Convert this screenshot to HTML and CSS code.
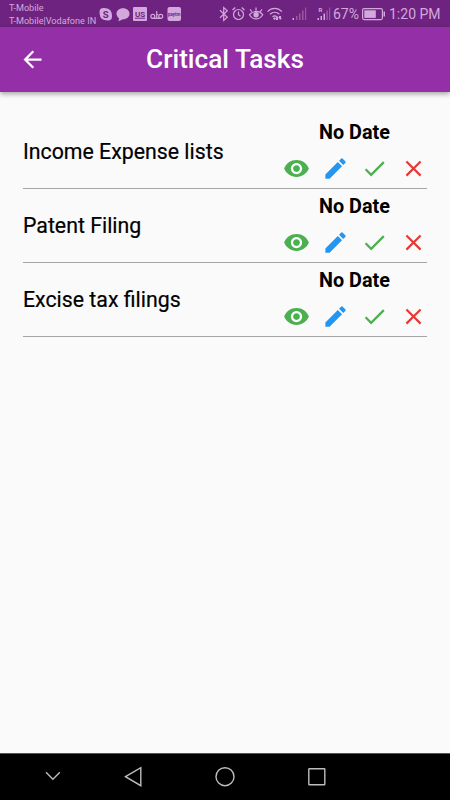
FILE: index.html
```html
<!DOCTYPE html>
<html lang="en">
<head>
<meta charset="utf-8">
<title>Critical Tasks</title>
<link rel="stylesheet" href="styles.css">
</head>
<body>
<svg class="defs" width="0" height="0" aria-hidden="true">
  <symbol id="eye" viewBox="0 0 24 24"><path d="M12 4.500C7 4.500 2.730 7.610 1 12c1.730 4.390 6 7.500 11 7.500s9.270-3.110 11-7.500c-1.730-4.390-6-7.500-11-7.500zM12 17c-2.760 0-5-2.240-5-5s2.240-5 5-5 5 2.240 5 5-2.240 5-5 5zm0-8c-1.660 0-3 1.340-3 3s1.340 3 3 3 3-1.340 3-3-1.340-3-3-3z"/></symbol>
  <symbol id="edit" viewBox="0 0 24 24"><path d="M3 17.250V21h3.750L17.810 9.940l-3.750-3.750L3 17.250zM20.710 7.040c.39-.39.39-1.020 0-1.410l-2.340-2.340c-.39-.39-1.020-.39-1.410 0l-1.830 1.830 3.750 3.750 1.830-1.830z"/></symbol>
  <symbol id="check" viewBox="0 0 24 24"><path d="M9 16.170L4.830 12l-1.420 1.410L9 19 21 7l-1.410-1.410z"/></symbol>
  <symbol id="close" viewBox="0 0 24 24"><path d="M19 6.410L17.590 5 12 10.590 6.410 5 5 6.410 10.590 12 5 17.590 6.410 19 12 13.410 17.590 19 19 17.590 13.410 12z"/></symbol>
</svg>
<div class="screen">
  <div class="status">
    <div class="carrier"><span>T-Mobile</span><span>T-Mobile|Vodafone IN</span></div>
    <svg class="notices" width="84" height="27" viewBox="99 0 84 27">
      <circle cx="103.500" cy="12" r="4"/><circle cx="108" cy="16.500" r="4"/><circle cx="105.800" cy="14.200" r="6"/>
      <text class="skype" x="105.800" y="17.500" text-anchor="middle">S</text>
      <path d="M123 8.300c3.800 0 6.500 2.400 6.500 5.500s-2.700 5.500-6.500 5.500l-4.500 2 .6-3c-1.600-1-2.600-2.600-2.600-4.500 0-3.100 2.700-5.500 6.500-5.500z"/>
      <rect x="133" y="7" width="14" height="14" rx="1"/>
      <text class="us" x="140" y="16.500" text-anchor="middle">US</text>
      <path class="cut" d="M135 18.200h10"/>
      <g class="line"><circle cx="152.800" cy="16.300" r="2"/><circle cx="160.700" cy="16.300" r="2"/><path d="M152.800 18.300h8M156.700 18v-7M156.700 14.500h1.500"/></g>
      <rect x="167.500" y="7" width="13.500" height="14" rx="2"/>
      <text class="paytm" x="174.200" y="15.500" text-anchor="middle">paytm</text>
    </svg>
    <svg class="signals" width="113" height="27" viewBox="218 0 113 27">
      <g class="line">
        <path d="M220 10.200l7.300 7-3.600 3.300V7.500l3.600 3.300-7.300 6.900"/>
        <circle cx="238.500" cy="14.500" r="5"/><path d="M238.500 11.500v3.200l2 1.600M232.500 10l2.800-2.500M244.500 10l-2.800-2.500"/>
        <path d="M249.500 14.700c3.500-4.300 9.700-4.300 13.200 0-3.500 5.600-9.700 5.600-13.200 0zM251.800 11.700l-1.700-2.300M256 10.500V7.500M260.300 11.700l1.700-2.300"/>
        <path d="M267.500 11.700c4.200-4.300 10.200-4.300 14.400 0M270 14.300c2.800-2.700 6.600-2.700 9.400 0M272.500 16.800c1.400-1.300 3-1.300 4.400 0"/>
      </g>
      <circle cx="256.100" cy="14.700" r="2.700"/><circle cx="274.500" cy="18.500" r="1.200"/>
      <path d="M277 16l2 2h-1v2h-2v-2zM280 20l2-2h-1v-2h-2v2z"/>
      <path d="M292.500 18h1.500v2h-1.500z"/>
      <path class="dim" d="M296 16h1.500v4H296zM299 13.500h1.500V20H299zM302 10.500h1.500V20H302zM305 7.500h1.200V20H305z"/>
      <path d="M317.500 18h1.500v2h-1.500zM320.500 16h1.500v4h-1.500zM323.500 13.500h1.500V20h-1.500z"/>
      <path class="dim" d="M326.300 10.500h1.500V20h-1.500zM329 7.500h1.200V20H329z"/>
      <text class="roam" x="318.500" y="12">R</text>
    </svg>
    <span class="percent">67%</span>
    <svg class="battery" width="24" height="27" viewBox="362 0 24 27">
      <rect class="outline" x="362.600" y="8.600" width="19.800" height="11" rx="1.500"/><rect x="364.300" y="10.300" width="11.500" height="7.600"/><path d="M383.500 11.500h1.500v5h-1.500z"/>
    </svg>
    <span class="time">1:20 PM</span>
  </div>
  <header class="bar">
    <svg class="back" viewBox="0 0 24 24"><path d="M20 11H7.830l5.590-5.590L12 4l-8 8 8 8 1.410-1.410L7.830 13H20v-2z"/></svg>
    <h1>Critical Tasks</h1>
  </header>
  <main class="list">
    <section class="task">
      <div class="name">Income Expense lists</div>
      <div class="side"><div class="date">No Date</div>
        <div class="actions"><svg class="green"><use href="#eye"/></svg><svg class="blue"><use href="#edit"/></svg><svg class="green"><use href="#check"/></svg><svg class="red"><use href="#close"/></svg></div></div>
    </section>
    <section class="task">
      <div class="name">Patent Filing</div>
      <div class="side"><div class="date">No Date</div>
        <div class="actions"><svg class="green"><use href="#eye"/></svg><svg class="blue"><use href="#edit"/></svg><svg class="green"><use href="#check"/></svg><svg class="red"><use href="#close"/></svg></div></div>
    </section>
    <section class="task">
      <div class="name">Excise tax filings</div>
      <div class="side"><div class="date">No Date</div>
        <div class="actions"><svg class="green"><use href="#eye"/></svg><svg class="blue"><use href="#edit"/></svg><svg class="green"><use href="#check"/></svg><svg class="red"><use href="#close"/></svg></div></div>
    </section>
  </main>
  <nav class="nav">
    <svg width="450" height="46" viewBox="0 754 450 46">
      <path d="M46 772.300l6.900 6.900 6.900-6.900"/>
      <path d="M125.500 776.700l15.300-9v18z"/>
      <circle cx="225" cy="776.700" r="9"/>
      <rect x="308.800" y="768.700" width="16" height="16" rx=".5"/>
    </svg>
  </nav>
</div>
</body>
</html>
```
FILE: styles.css
```css
body { margin: 0; font-family: Roboto, "Liberation Sans", sans-serif; background: #fafafa; }
svg { display: block; flex: none; }
.defs { position: absolute; }
.screen { display: flex; flex-direction: column; width: 450px; height: 800px; overflow: hidden; background: #fafafa; }

.status { display: flex; flex: none; height: 27px; background: #6f2380; color: #d3a8dc; fill: #d3a8dc; white-space: nowrap; }
.carrier { display: flex; flex-direction: column; width: 90px; padding: 2px 0 0 9px; font-size: 9.150px; line-height: 13px; }
.signals { margin-left: 35px; }
.line { fill: none; stroke: #d3a8dc; stroke-width: 1.2; }
.dim { fill: #99589f; }
.cut { stroke: #6f2380; stroke-width: 1; }
.notices text { fill: #6f2380; font-weight: 700; }
.notices .skype { font-size: 9.500px; }
.us { font-size: 8px; }
.paytm { font-size: 4.5px; }
.roam { font-size: 6px; font-weight: 700; }
.percent { width: 29px; margin-left: 2px; font-size: 14px; line-height: 29px; }
.outline { fill: none; stroke: #d3a8dc; stroke-width: 1.2; }
.battery { margin-right: 3px; }
.time { font-size: 14px; line-height: 29px; }

.bar { display: grid; grid-template-columns: 63px 1fr 63px; align-items: center; flex: none; height: 64.500px; margin-bottom: .5px; background: #942fa8; box-shadow: 0 2px 5px rgba(0, 0, 0, .35); }
.back { width: 27px; height: 27px; margin-left: 18.500px; fill: #fff; }
h1 { margin: 0; padding-bottom: 1px; text-align: center; font-size: 26.200px; font-weight: 500; line-height: 32px; color: #fff; }

.list { flex: 1; padding: 23px 23px 0; }
.task { display: flex; justify-content: space-between; height: 73px; border-bottom: 1px solid #a5a5a5; }
.name { padding-top: 24px; font-size: 21.300px; line-height: 26px; color: #000; -webkit-text-stroke: .2px #000; }
.side { width: 156px; margin-right: -6px; }
.date { padding: 6px 0 0 13px; width: 117px; text-align: center; font-size: 19.800px; font-weight: 700; line-height: 24px; color: #000; margin-left: 6px; }
.actions { display: flex; justify-content: space-around; padding-top: 9.500px; }
.actions svg { width: 27px; height: 27px; }
.green { fill: #4caf50; }
.blue { fill: #2196f3; }
.red { fill: #e53935; }

.nav { flex: none; height: 46px; border-top: 1px solid #555; background: #000; }
.nav svg { fill: none; stroke: #bdbdbd; stroke-width: 1.4; }
```
